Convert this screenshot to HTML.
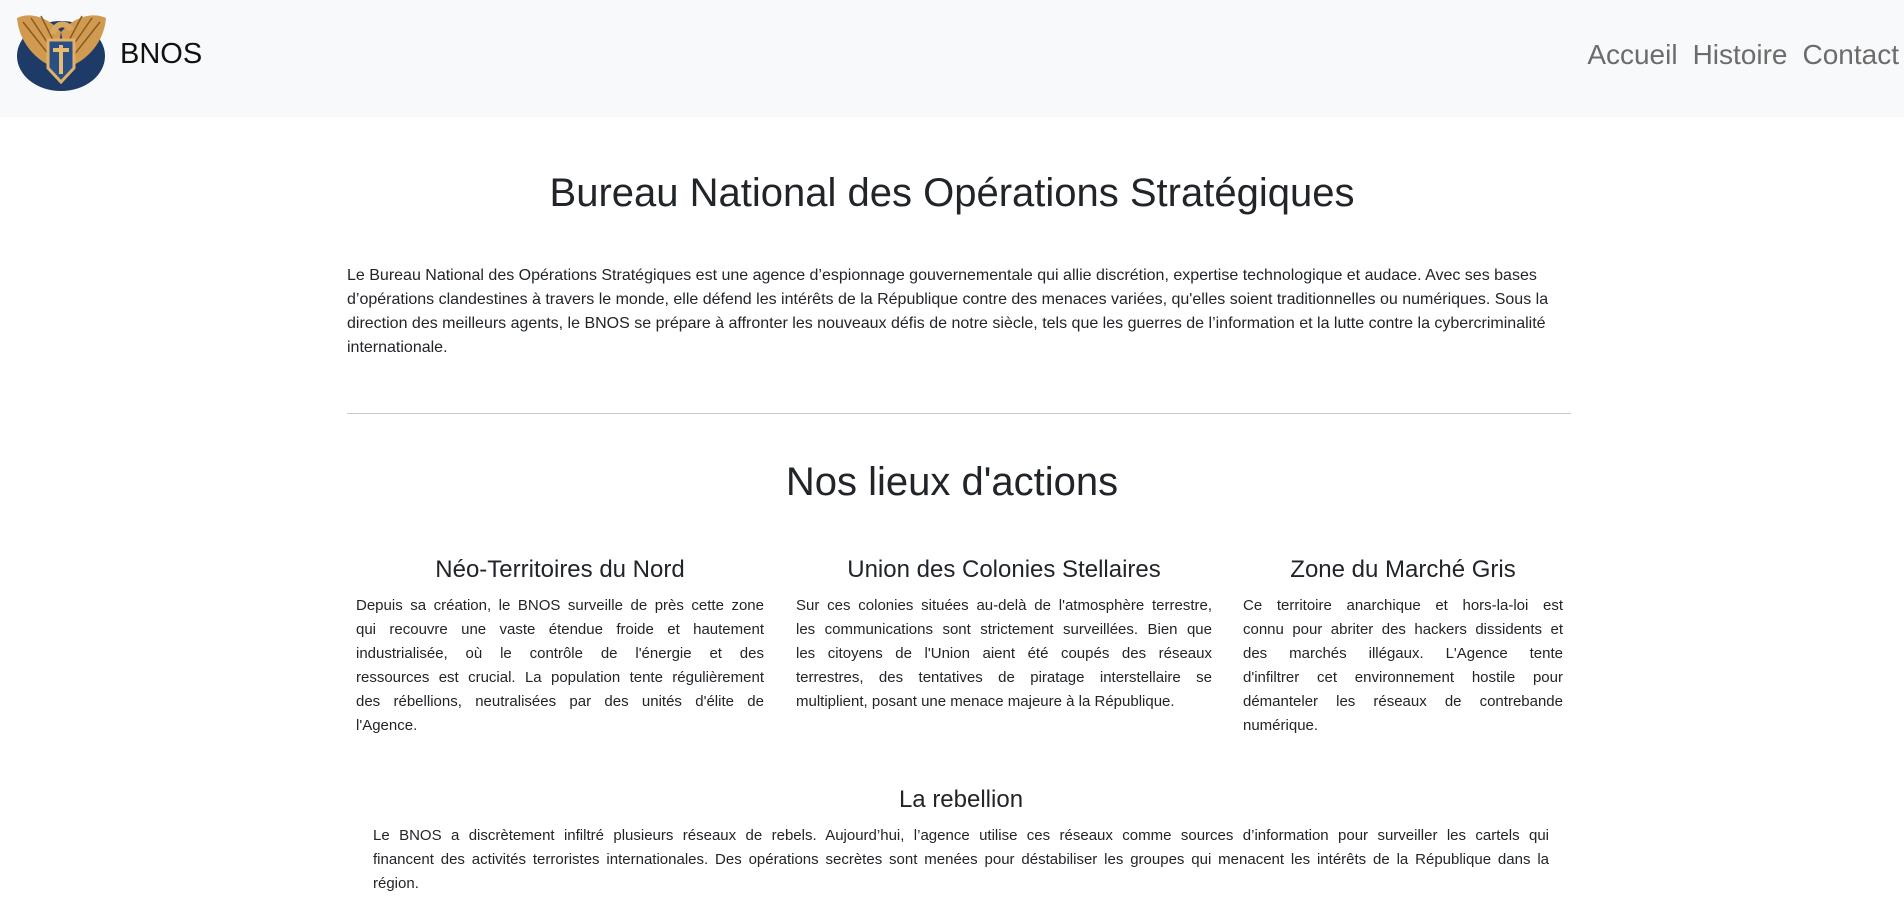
<!DOCTYPE html>
<html><head><meta charset="utf-8"><style>
*{margin:0;padding:0;box-sizing:border-box}
body{width:1904px;height:912px;overflow:hidden;background:#fff;font-family:"Liberation Sans",sans-serif;color:#212529}
.nav{height:117px;background:#f8f9fa;position:relative}
.logo{position:absolute;left:15px;top:10px;width:93px;height:82px}
.brand{position:absolute;left:120px;top:38px;font-size:29px;color:#111}
.links{position:absolute;right:5px;top:39px;font-size:28px;color:#6c6c6c;word-spacing:0}
.links span{margin-left:15px}
h1{position:absolute;width:100%;text-align:center;font-weight:400;font-size:40px;left:0}
.intro{position:absolute;left:347px;top:264px;font-size:16px;line-height:24px;white-space:nowrap}
hr{position:absolute;left:347px;width:1224px;top:413px;border:0;border-top:1px solid #ccc}
.col{position:absolute;font-size:15px;line-height:24px}
.col h3{font-weight:400;font-size:24px;text-align:center;position:absolute;width:100%;top:-36px;white-space:nowrap}
.col div{text-align:justify;text-align-last:justify;white-space:nowrap}
.col div.l{text-align-last:left}
</style></head><body>
<div class="nav">
<svg class="logo" viewBox="0 0 93 82">
<ellipse cx="46" cy="46" rx="44" ry="35" fill="#1e3a66"/>
<path d="M46 22 C32 6 14 2 2 8 C4 32 20 50 40 58 Z" fill="#d09a50"/>
<path d="M46 22 C60 6 78 2 91 8 C89 32 73 50 52 58 Z" fill="#d09a50"/>
<path d="M8 12 L38 50 M16 8 L40 44 M26 6 L42 38 M85 12 L55 50 M77 8 L52 44 M67 6 L50 38" stroke="#8a5a22" stroke-width="1.5"/>
<path d="M33 30 L59 30 L59 58 L46 72 L33 58 Z" fill="#2a4f85" stroke="#e0b06a" stroke-width="3"/>
<path d="M38 40 L54 40 M46 35 L46 64" stroke="#e8bb72" stroke-width="4"/>
<path d="M38 24 C40 12 52 12 56 20" stroke="#d8a860" stroke-width="6" fill="none"/>
</svg>
<div class="brand">BNOS</div>
<div class="links"><span>Accueil</span><span>Histoire</span><span>Contact</span></div>
</div>
<h1 style="top:171px">Bureau National des Opérations Stratégiques</h1>
<div class="intro">Le Bureau National des Opérations Stratégiques est une agence d’espionnage gouvernementale qui allie discrétion, expertise technologique et audace. Avec ses bases<br>d’opérations clandestines à travers le monde, elle défend les intérêts de la République contre des menaces variées, qu'elles soient traditionnelles ou numériques. Sous la<br>direction des meilleurs agents, le BNOS se prépare à affronter les nouveaux défis de notre siècle, tels que les guerres de l’information et la lutte contre la cybercriminalité<br>internationale.</div>
<hr>
<h1 style="top:460px">Nos lieux d'actions</h1>
<div class="col" style="left:356px;width:408px;top:594px"><h3>Néo-Territoires du Nord</h3>
<div>Depuis sa création, le BNOS surveille de près cette zone</div><div>qui recouvre une vaste étendue froide et hautement</div><div>industrialisée, où le contrôle de l'énergie et des</div><div>ressources est crucial. La population tente régulièrement</div><div>des rébellions, neutralisées par des unités d'élite de</div><div class="l">l'Agence.</div></div>
<div class="col" style="left:796px;width:416px;top:594px"><h3>Union des Colonies Stellaires</h3>
<div>Sur ces colonies situées au-delà de l'atmosphère terrestre,</div><div>les communications sont strictement surveillées. Bien que</div><div>les citoyens de l'Union aient été coupés des réseaux</div><div>terrestres, des tentatives de piratage interstellaire se</div><div class="l">multiplient, posant une menace majeure à la République.</div></div>
<div class="col" style="left:1243px;width:320px;top:594px"><h3>Zone du Marché Gris</h3>
<div>Ce territoire anarchique et hors-la-loi est</div><div>connu pour abriter des hackers dissidents et</div><div>des marchés illégaux. L'Agence tente</div><div>d'infiltrer cet environnement hostile pour</div><div>démanteler les réseaux de contrebande</div><div class="l">numérique.</div></div>
<div class="col" style="left:373px;width:1176px;top:824px"><h3>La rebellion</h3>
<div>Le BNOS a discrètement infiltré plusieurs réseaux de rebels. Aujourd’hui, l’agence utilise ces réseaux comme sources d’information pour surveiller les cartels qui</div><div>financent des activités terroristes internationales. Des opérations secrètes sont menées pour déstabiliser les groupes qui menacent les intérêts de la République dans la</div><div class="l">région.</div></div>
</body></html>
